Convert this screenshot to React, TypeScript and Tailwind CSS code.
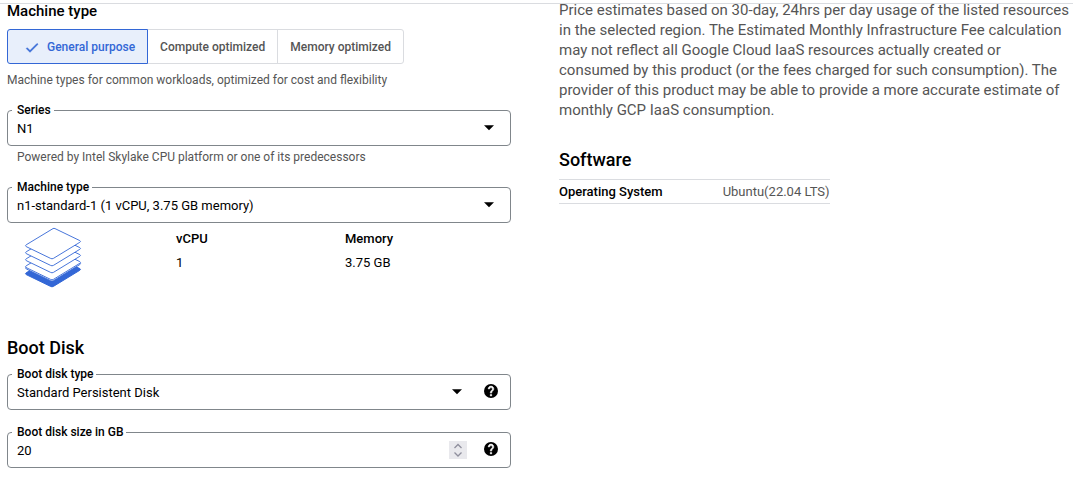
import { useState, type ReactNode } from "react";

const MACHINE_CLASSES = ["General purpose", "Compute optimized", "Memory optimized"];

function CaretIcon() {
  return (
    <svg className="h-5 w-5 shrink-0" viewBox="0 0 20 20" aria-hidden="true">
      <path d="M5 6.3h10l-5 5z" fill="#000" />
    </svg>
  );
}

function HelpIcon() {
  return (
    <svg className="h-[14px] w-[14px]" viewBox="2 2 20 20" aria-hidden="true">
      <circle cx="12" cy="12" r="10" fill="#000" />
      <path
        fill="#fff"
        stroke="#fff"
        strokeWidth="0.8"
        d="M13 19h-2v-2h2v2zm2.07-7.75l-.9.92C13.45 12.9 13 13.5 13 15h-2v-.5c0-1.1.45-2.1 1.17-2.83l1.24-1.26c.37-.36.59-.86.59-1.41 0-1.1-.9-2-2-2s-2 .9-2 2H8c0-2.21 1.79-4 4-4s4 1.79 4 4c0 .88-.36 1.68-.93 2.25z"
      />
    </svg>
  );
}

const SHEET =
  "M38 6.6Q39 6 40 6.6L64.8 18.6Q66.2 19.4 64.8 20.3L38.4 36.4Q37 37.2 35.6 36.4L11.2 24.6Q9.8 23.7 11.2 22.8Z";

function StackIcon() {
  return (
    <svg className="h-[61px] w-[58px]" viewBox="9 5 58 61" aria-hidden="true">
      <path d={SHEET} transform="translate(0 28)" fill="#3367d6" stroke="#3367d6" />
      {[22.3, 21, 14, 7, 0].map((y) => (
        <path key={y} d={SHEET} transform={`translate(0 ${y})`} fill="#fff" stroke="#3367d6" strokeWidth="0.9" />
      ))}
    </svg>
  );
}

function Field({ id, label, children }: { id: string; label: string; children: ReactNode }) {
  return (
    <fieldset className="min-w-0 rounded border border-[#80868b] px-1 pb-[5px]">
      <legend className="pr-[3px] pl-[5px] text-xs leading-4 font-medium">
        <label htmlFor={id}>{label}</label>
      </legend>
      <div className="flex h-[22px] items-center pr-[7px] pl-[5px]">{children}</div>
    </fieldset>
  );
}

function SelectBox({ id, options }: { id: string; options: string[] }) {
  return (
    <div className="grid min-w-0 flex-1 grid-cols-1 items-center">
      <select
        id={id}
        className="col-start-1 row-start-1 h-5 w-full appearance-none bg-transparent pr-6 text-[13px] leading-5 outline-none"
      >
        {options.map((o) => (
          <option key={o}>{o}</option>
        ))}
      </select>
      <div className="pointer-events-none col-start-1 row-start-1 flex justify-end">
        <CaretIcon />
      </div>
    </div>
  );
}

function HelpButton({ label }: { label: string }) {
  return (
    <button
      type="button"
      aria-label={label}
      className="mt-px ml-4 flex h-4 w-4 shrink-0 items-center justify-center self-start"
    >
      <HelpIcon />
    </button>
  );
}

export default function App() {
  const [selected, setSelected] = useState(MACHINE_CLASSES[0]);
  const [size, setSize] = useState(20);

  return (
    <div className="bg-white font-['Roboto',sans-serif] text-black">
      <header className="h-1 border-b border-[#dadce0]" />
      <main className="grid grid-cols-[504fr_514fr] gap-12 pl-[7px]">
        <section className="min-w-0">
          <h2 className="text-[15px] leading-[14px] font-medium">Machine type</h2>
          <div className="mt-[11px] flex" role="group" aria-label="Machine type">
            {MACHINE_CLASSES.map((name) => {
              const active = name === selected;
              return (
                <button
                  key={name}
                  type="button"
                  aria-pressed={active}
                  onClick={() => setSelected(name)}
                  className={
                    "-ml-px flex h-[35px] items-center border px-3 text-xs font-medium first:ml-0 first:rounded-l-[3px] last:rounded-r-[3px] " +
                    (active
                      ? "z-10 border-[#3367d6] bg-[#e8effb] text-[#3367d6]"
                      : "border-[#dadce0] text-[#555]")
                  }
                >
                  {active && (
                    <svg className="mr-[7px] ml-1 h-4 w-4" viewBox="0 -1 24 24" aria-hidden="true">
                      <path
                        fill="#3367d6"
                        stroke="#3367d6"
                        strokeWidth="0.8"
                        d="M9 16.17L4.83 12l-1.42 1.41L9 19 21 7l-1.41-1.41z"
                      />
                    </svg>
                  )}
                  {name}
                </button>
              );
            })}
          </div>
          <p className="mt-2 text-xs leading-4 text-[#555]">
            Machine types for common workloads, optimized for cost and flexibility
          </p>

          <div className="mt-[14px]">
            <Field id="series" label="Series">
              <SelectBox id="series" options={["N1", "N2", "E2"]} />
            </Field>
          </div>
          <p className="mt-[3px] px-[10px] text-xs leading-4 text-[#555]">
            Powered by Intel Skylake CPU platform or one of its predecessors
          </p>

          <div className="mt-[14px]">
            <Field id="machine-type" label="Machine type">
              <SelectBox
                id="machine-type"
                options={["n1-standard-1 (1 vCPU, 3.75 GB memory)", "n1-standard-2 (2 vCPU, 7.5 GB memory)"]}
              />
            </Field>
          </div>

          <div className="mt-1 flex">
            <div className="w-[169px] pl-[17px]">
              <StackIcon />
            </div>
            <dl className="flex text-[13px] leading-6">
              <div className="w-[169px]">
                <dt className="font-medium">vCPU</dt>
                <dd>1</dd>
              </div>
              <div>
                <dt className="font-medium">Memory</dt>
                <dd>3.75 GB</dd>
              </div>
            </dl>
          </div>

          <h2 className="mt-12 text-lg leading-6 font-medium">Boot Disk</h2>
          <div className="mt-[6px] flex flex-col gap-[14px]">
            <Field id="disk-type" label="Boot disk type">
              <SelectBox id="disk-type" options={["Standard Persistent Disk", "SSD Persistent Disk"]} />
              <HelpButton label="About boot disk type" />
            </Field>
            <Field id="disk-size" label="Boot disk size in GB">
              <input
                id="disk-size"
                type="number"
                value={size}
                onChange={(e) => setSize(Number(e.target.value))}
                className="h-5 min-w-0 flex-1 [appearance:textfield] bg-transparent text-[13px] leading-5 outline-none [&::-webkit-inner-spin-button]:appearance-none"
              />
              <div className="mt-px flex h-[18px] w-[18px] shrink-0 flex-col self-start bg-[#e9e9ed]">
                <button
                  type="button"
                  aria-label="Increase size"
                  onClick={() => setSize(size + 1)}
                  className="flex h-[9px] items-center justify-center"
                >
                  <svg className="h-[9px] w-[18px]" viewBox="0 0 18 9" aria-hidden="true">
                    <path d="M5.5 7L9 3.5L12.5 7" fill="none" stroke="#8f8f9d" strokeWidth="1.3" />
                  </svg>
                </button>
                <button
                  type="button"
                  aria-label="Decrease size"
                  onClick={() => setSize(size - 1)}
                  className="flex h-[9px] items-center justify-center"
                >
                  <svg className="h-[9px] w-[18px]" viewBox="0 0 18 9" aria-hidden="true">
                    <path d="M5.5 2.5L9 6L12.5 2.5" fill="none" stroke="#8f8f9d" strokeWidth="1.3" />
                  </svg>
                </button>
              </div>
              <HelpButton label="About boot disk size" />
            </Field>
          </div>
        </section>

        <section className="-mt-1 min-w-0">
          <p className="text-[15px] leading-5 text-[#555]">
            Price estimates based on 30-day, 24hrs per day usage of the listed resources in the selected
            region. The Estimated Monthly Infrastructure Fee calculation may not reflect all Google Cloud
            IaaS resources actually created or consumed by this product (or the fees charged for such
            consumption). The provider of this product may be able to provide a more accurate estimate of
            monthly GCP IaaS consumption.
          </p>
          <h2 className="mt-7 text-lg leading-6 font-medium">Software</h2>
          <table className="mt-[7px] border-collapse text-[13px] leading-[22px]">
            <tbody>
              <tr className="border-y border-[#dadce0]">
                <th scope="row" className="pt-px pr-[60px] text-left font-medium">
                  Operating System
                </th>
                <td className="pt-px text-[#555]">Ubuntu(22.04 LTS)</td>
              </tr>
            </tbody>
          </table>
        </section>
      </main>
    </div>
  );
}
